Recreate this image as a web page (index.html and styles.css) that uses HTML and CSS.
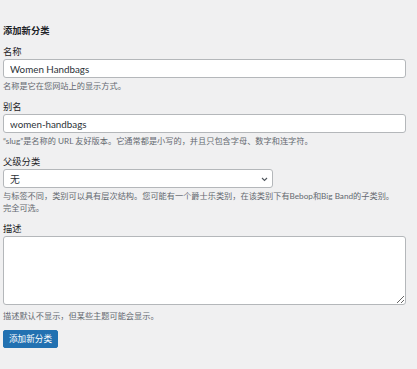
FILE: index.html
```
<!DOCTYPE html>
<html lang="zh-CN">
<head>
<meta charset="utf-8">
<title>添加新分类</title>
<link rel="stylesheet" href="styles.css">
</head>
<body>
<div class="form-wrap">
  <h2 class="heading">添加新分类</h2>
  <form class="tag-form">
    <div class="field">
      <label class="label" for="tag-name">名称</label>
      <input class="input" id="tag-name" type="text" value="Women Handbags">
      <p class="desc">名称是它在您网站上的显示方式。</p>
    </div>
    <div class="field">
      <label class="label" for="tag-slug">别名</label>
      <input class="input" id="tag-slug" type="text" value="women-handbags">
      <p class="desc">“slug”是名称的 URL 友好版本。它通常都是小写的，并且只包含字母、数字和连字符。</p>
    </div>
    <div class="field">
      <label class="label" for="parent">父级分类</label>
      <div class="select-wrap">
        <select class="select" id="parent"><option>无</option></select>
        <svg class="chevron" width="7" height="5" viewBox="0 0 7 5"><path d="M1 1l2.5 2.5L6 1" fill="none" stroke="#50575e" stroke-width="1.1"/></svg>
      </div>
      <p class="desc desc-tight">与标签不同，类别可以具有层次结构。您可能有一个爵士乐类别，在该类别下有Bebop和Big Band的子类别。完全可选。</p>
    </div>
    <div class="field">
      <label class="label" for="tag-desc">描述</label>
      <textarea class="textarea" id="tag-desc"></textarea>
      <p class="desc desc-gap">描述默认不显示，但某些主题可能会显示。</p>
    </div>
    <button class="button" type="button">添加新分类</button>
  </form>
</div>
</body>
</html>
```
FILE: styles.css
```
* { box-sizing: border-box; }
html, body {
  margin: 0;
  padding: 0;
  background: #f0f0f1;
}
body {
  font-family: Lato, "Noto Sans CJK SC", sans-serif;
  color: #1d2327;
}
.form-wrap {
  padding: 24px 11px 20px 3px;
}
.heading {
  margin: 0 0 7px;
  font-size: 9.3px;
  line-height: 14px;
  font-weight: 700;
}
.field {
  margin-bottom: 8px;
}
.label {
  display: block;
  font-size: 9.3px;
  line-height: 14px;
}
.input {
  display: block;
  width: 100%;
  height: 19px;
  margin: 0;
  padding: 0 6px;
  border: 1px solid #b4b7ba;
  border-radius: 3px;
  background: #fff;
  font-family: Lato, "Noto Sans CJK SC", sans-serif;
  font-size: 9.8px;
  color: #2c3338;
  outline: none;
}
.desc {
  margin: 2px 0 0;
  font-size: 8.2px;
  line-height: 12px;
  color: #646970;
}
.desc-tight {
  max-width: 393px;
}
.desc-gap {
  margin-top: 5px;
}
.select-wrap {
  position: relative;
  width: 270px;
}
.select {
  display: block;
  width: 100%;
  height: 19px;
  margin: 0;
  padding: 0 6px;
  border: 1px solid #b4b7ba;
  border-radius: 3px;
  background: #fff;
  font-family: Lato, "Noto Sans CJK SC", sans-serif;
  font-size: 9.8px;
  color: #2c3338;
  appearance: none;
  -webkit-appearance: none;
  outline: none;
}
.chevron {
  position: absolute;
  right: 5px;
  top: 8px;
}
.textarea {
  display: block;
  width: 100%;
  height: 69px;
  margin: 0;
  border: 1px solid #b4b7ba;
  border-radius: 3px;
  background: #fff;
  outline: none;
}
.button {
  display: block;
  height: 18px;
  padding: 0 5px;
  border: 1px solid #2271b1;
  border-radius: 2px;
  background: #2271b1;
  color: #fff;
  font-family: Lato, "Noto Sans CJK SC", sans-serif;
  font-size: 8.6px;
  line-height: 16px;
}
```
